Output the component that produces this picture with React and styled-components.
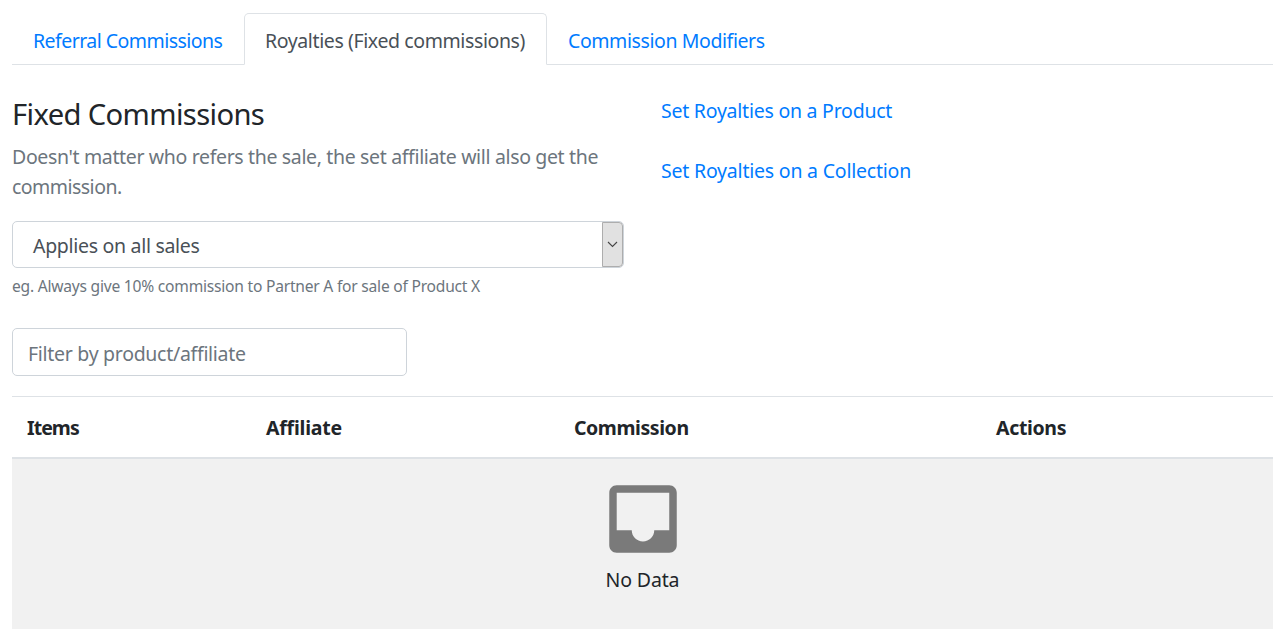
import React from "react";
import styled, { createGlobalStyle } from "styled-components";

const Global = createGlobalStyle`
  *, *::before, *::after { box-sizing: border-box; }
  body { margin: 0; background: #fff; color: #212529; font: 19.5px/30px "Segoe UI", "Noto Sans", "Open Sans", sans-serif; overflow: hidden; }
`;

const Page = styled.main`
  height: 637px;
  padding: 13px 10px 8px 12px;
  display: flex;
  flex-direction: column;
`;
const Tabs = styled.nav`
  display: flex;
  height: 52px;
  border-bottom: 1px solid #dee2e6;
`;
const Tab = styled.a`
  width: ${(p) => p.$w}px;
  height: 52px;
  padding: 12px 20px 0;
  border: 1px solid;
  border-color: ${(p) => (p.$active ? "#dee2e6 #dee2e6 #fff" : "transparent")};
  border-radius: 5px 5px 0 0;
  color: ${(p) => (p.$active ? "#495057" : "#007bff")};
  white-space: nowrap;
`;
const Label = styled.span`
  display: inline-block;
  white-space: nowrap;
  letter-spacing: ${(p) => p.$ls || 0}px;
`;
const Columns = styled.section`
  display: flex;
  height: 263px;
`;
const Left = styled.div`
  width: 649px;
  padding-top: 31px;
`;
const Right = styled.div`
  display: flex;
  flex-direction: column;
  gap: 30px;
  padding-top: 31px;
`;
const Link = styled.a`
  color: #007bff;
`;
const Title = styled.h1`
  margin: 0 0 10px;
  font-size: 29.2px;
  line-height: 36px;
  font-weight: 400;
`;
const Muted = styled.p`
  margin: 0;
  color: #6c757d;
`;
const Select = styled.div`
  display: flex;
  width: 612px;
  height: 47px;
  margin-top: 19px;
  border: 1px solid #ced4da;
  border-radius: 5px;
  color: #495057;
`;
const SelectText = styled.div`
  flex: 1;
  padding: 9px 20px;
`;
const Arrow = styled.div`
  display: flex;
  align-items: center;
  justify-content: center;
  width: 21px;
  border: 1px solid #adadad;
  border-radius: 0 4px 4px 0;
  background: #e1e1e1;
`;
const Hint = styled.small`
  display: block;
  margin-top: 6px;
  font-size: 15.6px;
  line-height: 24px;
  color: #6c757d;
`;
const Filter = styled.input`
  display: block;
  width: 395px;
  height: 48px;
  padding: 3px 15px 0;
  border: 1px solid #ced4da;
  border-radius: 5px;
  font: inherit;
  letter-spacing: -0.29px;
  &::placeholder { color: #6c757d; opacity: 1; }
`;
const Head = styled.div`
  display: grid;
  grid-template-columns: 239px 308px 422px 1fr;
  height: 63px;
  margin-top: 20px;
  padding: 16px 15px 0;
  border-top: 1px solid #dee2e6;
  border-bottom: 2px solid #dee2e6;
  font-weight: 700;
`;
const Empty = styled.div`
  display: flex;
  flex-direction: column;
  align-items: center;
  gap: 1px;
  height: 170px;
  padding-top: 15px;
  background: #f1f1f1;
`;

export default function App() {
  return (
    <Page>
      <Global />
      <Tabs>
        <Tab $w={232}><Label $ls={-0.54}>Referral Commissions</Label></Tab>
        <Tab $w={303} $active><Label $ls={-0.39}>Royalties (Fixed commissions)</Label></Tab>
        <Tab $w={240}><Label $ls={-0.41}>Commission Modifiers</Label></Tab>
      </Tabs>
      <Columns>
        <Left>
          <Title><Label $ls={-0.63}>Fixed Commissions</Label></Title>
          <Muted>
            <Label $ls={-0.35}>Doesn't matter who refers the sale, the set affiliate will also get the</Label>
            <br />
            <Label $ls={-0.53}>commission.</Label>
          </Muted>
          <Select>
            <SelectText><Label $ls={-0.3}>Applies on all sales</Label></SelectText>
            <Arrow>
              <svg width="11" height="7" viewBox="0 0 11 7" fill="none" stroke="#444" strokeWidth="1.1"><path d="M1 1l4.5 4.5L10 1" /></svg>
            </Arrow>
          </Select>
          <Hint><Label $ls={-0.225}>eg. Always give 10% commission to Partner A for sale of Product X</Label></Hint>
        </Left>
        <Right>
          <Link><Label $ls={-0.24}>Set Royalties on a Product</Label></Link>
          <Link><Label $ls={-0.21}>Set Royalties on a Collection</Label></Link>
        </Right>
      </Columns>
      <Filter placeholder="Filter by product/affiliate" />
      <Head>
        <Label $ls={-0.95}>Items</Label>
        <Label $ls={-0.22}>Affiliate</Label>
        <Label $ls={-0.42}>Commission</Label>
        <Label $ls={-0.34}>Actions</Label>
      </Head>
      <Empty>
        <svg width="90" height="90" viewBox="0 0 24 24" fill="#7a7a7a"><path d="M19 3H4.99c-1.11 0-1.98.89-1.98 2L3 19c0 1.1.88 2 1.99 2H19c1.1 0 2-.9 2-2V5c0-1.11-.9-2-2-2zm0 12h-4c0 1.66-1.35 3-3 3s-3-1.34-3-3H4.99V5H19v10z" /></svg>
        <Label $ls={-0.15}>No Data</Label>
      </Empty>
    </Page>
  );
}
